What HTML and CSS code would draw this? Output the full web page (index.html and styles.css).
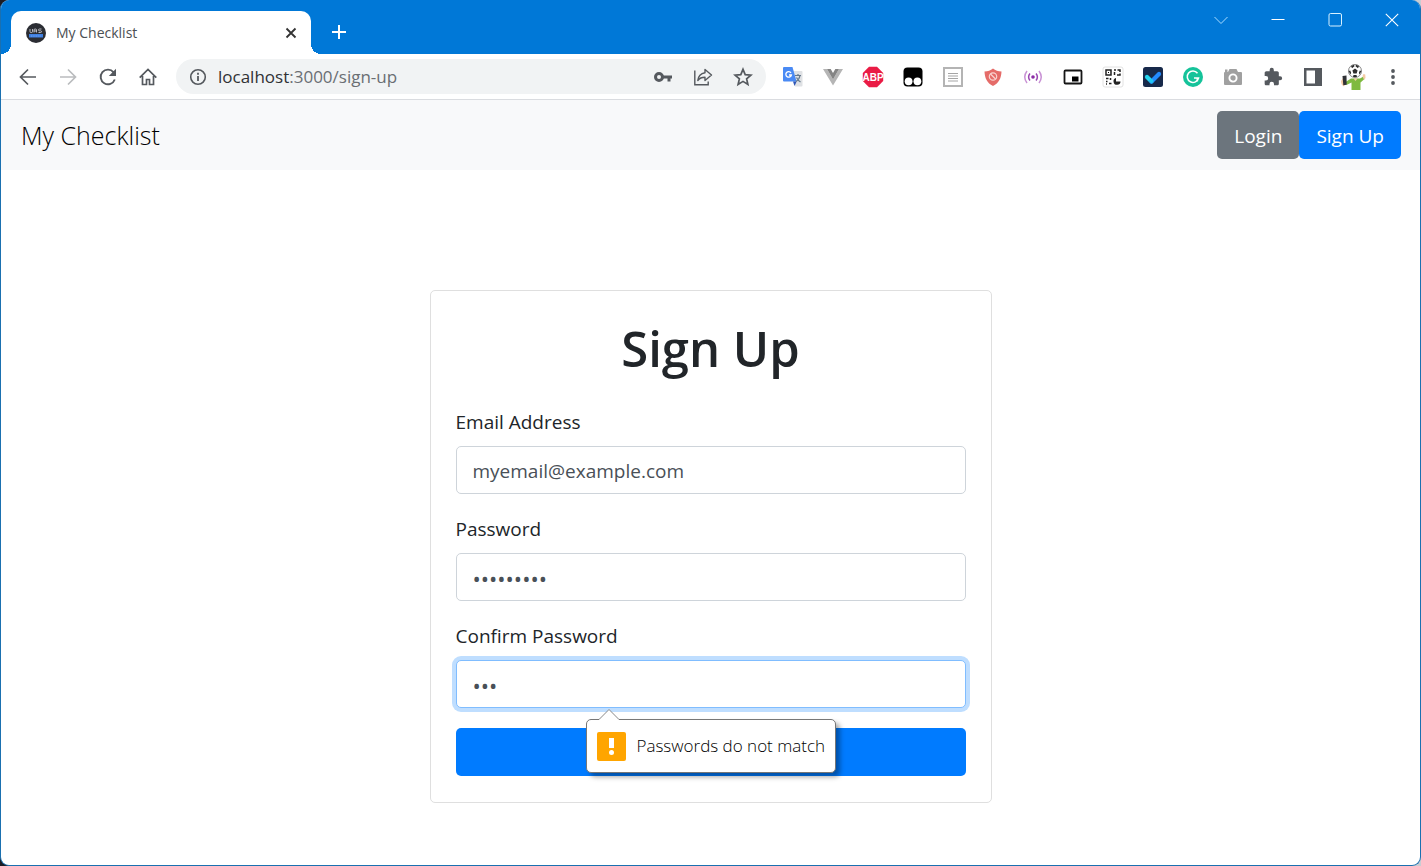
FILE: index.html
```html
<!DOCTYPE html>
<html lang="en">
<head>
<meta charset="utf-8">
<title>My Checklist</title>
<link rel="stylesheet" href="styles.css">
</head>
<body>
<div class="window">
  <header class="tabstrip">
    <div class="tab">
      <svg class="favicon" viewBox="0 0 20 20" aria-hidden="true"><circle cx="10" cy="10" r="10" fill="#2b2d33"/><path d="M4 6v2.500q0 1 1 1h.5q1 0 1-1V6M8 9.500V7q0-1 1-1h.5q1 0 1 1v2.500M8 8h2.500M15.500 6h-2q-1 0-1 .9t1 .9h1q1 0 1 .85t-1 .85h-2" fill="none" stroke="#c9cbd0" stroke-width=".9"/><path d="M3 11h14v3.500H3z" fill="#3f7fe0"/><path d="M5 13h10" stroke="#6fa4f0" stroke-width="1" stroke-dasharray="1 .7"/></svg>
      <span class="tab-title">My Checklist</span>
      <button class="tab-close" aria-label="Close tab"><svg width="12" height="12" viewBox="0 0 12 12"><path d="M1.500 1.500l9 9M10.500 1.500l-9 9" stroke="#333" stroke-width="1.800"/></svg></button>
    </div>
    <button class="new-tab" aria-label="New tab"><svg width="16" height="16" viewBox="0 0 16 16"><path d="M8 1v14M1 8h14" stroke="#fff" stroke-width="2"/></svg></button>
    <div class="controls">
      <button aria-label="Search tabs"><svg width="14" height="14" viewBox="0 0 14 14"><path d="M.5 4l6.500 6.500L13.500 4" fill="none" stroke="#a9dcff"/></svg></button>
      <button aria-label="Minimize"><svg width="14" height="14" viewBox="0 0 14 14"><path d="M.5 6.500h13" stroke="#fff"/></svg></button>
      <button aria-label="Maximize"><svg width="14" height="14" viewBox="0 0 14 14"><rect x="1" y=".5" width="12.500" height="12.500" rx="1.500" fill="none" stroke="#d8f1ff"/></svg></button>
      <button aria-label="Close"><svg width="14" height="14" viewBox="0 0 14 14"><path d="M.8.8l12.400 12.400M13.200.8L.8 13.200" stroke="#fff" stroke-width="1.100"/></svg></button>
    </div>
  </header>

  <div class="toolbar">
    <div class="tools">
      <button aria-label="Back"><svg width="20" height="20" viewBox="0 0 20 20"><path d="M18 10H3M10 2.500L2.500 10l7.500 7.500" fill="none" stroke="#55595e" stroke-width="1.700"/></svg></button>
      <button aria-label="Forward"><svg width="20" height="20" viewBox="0 0 20 20"><path d="M2 10h15M10 2.500l7.500 7.500-7.500 7.500" fill="none" stroke="#babcbe" stroke-width="1.700"/></svg></button>
      <button aria-label="Reload"><svg width="20" height="20" viewBox="0 0 20 20"><path d="M16.800 12.500A7.300 7.300 0 1 1 15.600 5.300" fill="none" stroke="#55595e" stroke-width="1.900"/><path d="M18 1.800V9h-7.200z" fill="#55595e"/></svg></button>
      <button aria-label="Home"><svg width="20" height="20" viewBox="0 0 20 20"><path d="M1.700 10.700L10 2.500l8.300 8.200M4.500 9v8.500h4v-5h3v5h4V9" fill="none" stroke="#55595e" stroke-width="1.700"/></svg></button>
    </div>
    <div class="omnibox">
      <svg width="18" height="18" viewBox="0 0 18 18" aria-hidden="true"><circle cx="9" cy="9" r="7.300" fill="none" stroke="#55595e" stroke-width="1.600"/><path d="M9 8v5M9 4.800v1.900" stroke="#55595e" stroke-width="1.800"/></svg>
      <div class="url">localhost<span class="path">:3000/sign-up</span></div>
      <div class="tools">
        <button aria-label="Passwords"><svg width="20" height="20" viewBox="0 0 20 20"><circle cx="6" cy="10" r="3.500" fill="none" stroke="#55595e" stroke-width="3"/><path d="M10 8.500h9v3h-1.500v3h-3v-3H10z" fill="#55595e"/></svg></button>
        <button aria-label="Share"><svg width="20" height="20" viewBox="0 0 20 20"><path d="M1.800 3.500v14.200h13.400v-3.200" fill="none" stroke="#55595e" stroke-width="1.400"/><path d="M12 2.500l6.500 5.500-6.500 5.500v-3.200c-3.400 0-5.600 1-7.200 3.200.5-4.500 3.200-7.200 7.200-7.800z" fill="none" stroke="#55595e" stroke-width="1.400" stroke-linejoin="round"/></svg></button>
        <button aria-label="Bookmark"><svg width="20" height="20" viewBox="0 0 20 20"><path d="M10 2.300l2.200 5.300 5.700.5-4.300 3.700 1.300 5.600-4.900-3-4.900 3 1.300-5.600-4.300-3.700 5.700-.5z" fill="none" stroke="#55595e" stroke-width="1.700"/></svg></button>
      </div>
    </div>
    <div class="tools">
      <button aria-label="Google Translate"><svg width="22" height="22" viewBox="0 0 22 22"><path d="M9 5h10.500q1 0 1 1v13.500q0 1-1 1H13z" fill="#dfe1e4"/><path d="M2 1h8.500l4 14.500H2q-1 0-1-1V2q0-1 1-1z" fill="#4a8af4"/><path d="M11 15.500h3.700L12.500 20z" fill="#2f56b5"/><path d="M9 6.800A2.800 2.800 0 1 0 9.400 9H7" fill="none" stroke="#fff" stroke-width="1.300"/><path d="M13 9.500h6M16 8v1.500M18 9.500c-.5 3-2.300 5-4 6M14.500 11.500q1.500 3 4 4.500" fill="none" stroke="#65798c" stroke-width="1.200"/></svg></button>
      <button aria-label="Vue devtools"><svg width="20" height="20" viewBox="0 0 20 20"><path d="M0 2h4l6 10.500L16 2h4L10 18.500z" fill="#b5b5b5"/><path d="M4 2h3.700L10 6l2.300-4H16l-6 10.500z" fill="#858585"/></svg></button>
      <button aria-label="Adblock Plus"><svg width="22" height="22" viewBox="0 0 22 22"><path d="M7 .8h8L21.200 7v8L15 21.200H7L.8 15V7z" fill="#ea1b45"/><text x="11" y="15" class="abp">ABP</text></svg></button>
      <button aria-label="Tampermonkey"><svg width="20" height="20" viewBox="0 0 20 20"><rect x=".5" y=".5" width="19" height="19" rx="4"/><circle cx="5.600" cy="14.300" r="3.900" fill="#fff"/><circle cx="14.400" cy="14.300" r="3.900" fill="#fff"/></svg></button>
      <button aria-label="Reader"><svg width="20" height="20" viewBox="0 0 20 20"><path d="M1 1h18v18H1z" fill="#fff" stroke="#b4b4b4" stroke-width="2"/><path d="M5 6.500h10M5 9h10M5 11.500h10M5 14h10" stroke="#a5a5a5" stroke-width="1.200"/></svg></button>
      <button aria-label="Shield"><svg width="20" height="20" viewBox="0 0 20 20"><path d="M10 1.500c2.500 2 5 2.800 8.500 3-.2 6.500-2.500 11.500-8.500 14.500C4 16 1.700 11 1.500 4.500c3.500-.2 6-1 8.500-3z" fill="#e56c69"/><circle cx="10" cy="9.500" r="3.700" fill="none" stroke="#f9d4d0" stroke-width="1.200"/><path d="M7.500 7l5 5" stroke="#f9d4d0" stroke-width="1.200"/></svg></button>
      <button aria-label="Broadcast"><svg width="20" height="20" viewBox="0 0 20 20"><circle cx="10" cy="10" r="1.800" fill="#8b2aa6"/><path d="M7 6.500q-2.800 3.500 0 7M13 6.500q2.800 3.500 0 7" fill="none" stroke="#9a46b2" stroke-width="1.500"/><path d="M4 4q-4.500 6 0 12M16 4q4.500 6 0 12" fill="none" stroke="#c993d5" stroke-width="1.500"/></svg></button>
      <button aria-label="Picture in picture"><svg width="20" height="20" viewBox="0 0 20 20"><rect x="1.500" y="3.500" width="17" height="13" rx="1" fill="#fff" stroke="#151515" stroke-width="1.800"/><path d="M9 9.500h6.500v5H9z"/></svg></button>
      <button aria-label="QR code"><svg width="22" height="22" viewBox="0 0 22 22"><rect x="1" y="1" width="20" height="20" rx="2" fill="#fff" stroke="#e2e2e2"/><path d="M4 4h5v5H4zM12 4h2M15.500 4H18v2M12.500 6v3M15 9h3V7.500M4 12.500h2.500M8.500 12v2M4 15.500h1.500M7 17.500h2.500M4 18h1" fill="none" stroke="#222" stroke-width="1.500"/><path d="M6 6h1v1H6z"/><path d="M14 12v3.500h4.500A3.500 3.500 0 1 1 14 12z" fill="#222"/></svg></button>
      <button aria-label="Tasks"><svg width="20" height="20" viewBox="0 0 20 20"><rect width="20" height="20" rx="2.500" fill="#17294a"/><path d="M4 10l4.500 4.500" stroke="#25d6ef" stroke-width="4.200" stroke-linecap="round"/><path d="M8.500 14.500L16 7" stroke="#238bff" stroke-width="4.200" stroke-linecap="round"/><circle cx="8.500" cy="14" r="2" fill="#20c9f3"/></svg></button>
      <button aria-label="Grammarly"><svg width="20" height="20" viewBox="0 0 20 20"><circle cx="10" cy="10" r="10" fill="#15c39a"/><path d="M14.500 6.300A5.700 5.700 0 1 0 15.500 11H11M14.300 14.500V11" fill="none" stroke="#fff" stroke-width="1.600"/></svg></button>
      <button aria-label="Screenshot"><svg width="20" height="20" viewBox="0 0 20 20"><path d="M1 6q0-1 1-1h3l1.500-3h7L15 5h3q1 0 1 1v11q0 1-1 1H2q-1 0-1-1zM2 2.500h2.500V5H2z" fill="#a0a0a0"/><circle cx="10" cy="11" r="3.600" fill="#a0a0a0" stroke="#fff" stroke-width="1.900"/></svg></button>
      <button aria-label="Extensions"><svg width="20" height="20" viewBox="0 0 24 24"><path fill="#55595e" d="M20.500 11H19V7c0-1.100-.9-2-2-2h-4V3.500a2.500 2.500 0 0 0-5 0V5H4c-1.100 0-2 .9-2 2v3.800h1.500a2.700 2.700 0 0 1 0 5.400H2V20c0 1.100.9 2 2 2h3.800v-1.500a2.700 2.700 0 0 1 5.400 0V22H17c1.100 0 2-.9 2-2v-4h1.500a2.500 2.500 0 0 0 0-5z"/></svg></button>
      <button aria-label="Side panel"><svg width="20" height="20" viewBox="0 0 20 20"><path d="M1 1h18v18H1zm2.500 2.500v13h8.500v-13z" fill="#55595e" fill-rule="evenodd"/></svg></button>
      <button aria-label="Profile"><svg width="26" height="28" viewBox="0 0 26 28"><path d="M11 15.500h9l3.500-2 1 2.500-4 3.500V27h-9v-7.500l-5 2.500-1-3z" fill="#7fba40"/><path d="M13.500 15.500h4l-2 2.500z" fill="#f5cba6"/><path d="M1 18l2-3 2.500 5L4 23.500q-3-1.500-3-5.500zM22.500 13l1-2 1.800.5.2 3.500-1.500 2z" fill="#f5cba6"/><path d="M2.500 13l4-.6.2 9.400-3.400.4z" fill="#303236"/><circle cx="15" cy="8" r="6.500" fill="#fff" stroke="#666" stroke-width=".8"/><path d="M15 5.500l2.600 1.900-1 3h-3.200l-1-3zM11 3l3-1.300.5 1.500-2.500 2zM19 3l-3-1.300-.5 1.500 2.500 2zM8.700 8l1.500-.5 1 2.500-1 1.500zM21.300 8l-1.500-.5-1 2.500 1 1.500zM13 14l.5-2h3l.5 2z" fill="#2d2d2d"/></svg></button>
      <button aria-label="Menu"><svg width="20" height="20" viewBox="0 0 20 20" fill="#55595e"><circle cx="10" cy="4" r="1.900"/><circle cx="10" cy="10" r="1.900"/><circle cx="10" cy="16" r="1.900"/></svg></button>
    </div>
  </div>

  <nav class="navbar">
    <a class="brand" href="#">My Checklist</a>
    <div class="nav-actions">
      <button class="btn btn-secondary">Login</button>
      <button class="btn btn-primary">Sign Up</button>
    </div>
  </nav>

  <main class="page">
    <form class="card">
      <h1>Sign Up</h1>
      <div class="group">
        <label for="email">Email Address</label>
        <input id="email" type="email" value="myemail@example.com">
      </div>
      <div class="group">
        <label for="password">Password</label>
        <input id="password" type="password" value="secret123">
      </div>
      <div class="group">
        <label for="confirm">Confirm Password</label>
        <input id="confirm" class="focused" type="password" value="abc">
        <div class="tooltip" role="alert">
          <svg class="tip" width="20" height="11" viewBox="0 0 20 11" aria-hidden="true"><path d="M0 10.500L10 .5l10 10V11H0z" fill="#fff"/><path d="M0 10.500L10 .5l10 10" fill="none" stroke="#888"/></svg>
          <svg width="29" height="29" viewBox="0 0 29 29" aria-hidden="true"><rect width="29" height="29" rx="2" fill="#ffa500"/><path d="M12 6h5v10h-5z" fill="#fff"/><circle cx="14.500" cy="20.500" r="2.500" fill="#fff"/></svg>
          <span>Passwords do not match</span>
        </div>
      </div>
      <button class="btn btn-primary" type="submit" aria-label="Sign Up"></button>
    </form>
  </main>
</div>
</body>
</html>
```
FILE: styles.css
```css
* { box-sizing: border-box; }

body {
  margin: 0;
  background: linear-gradient(90deg, #1c1c24 50%, #c9ccd2 50%);
  color: #212529;
  font: 19px/30px "Open Sans", "Noto Sans", sans-serif;
}

button, input { font: inherit; }

button {
  display: flex;
  align-items: center;
  justify-content: center;
  padding: 0;
  border: 0;
  background: none;
}

svg { display: block; flex: none; }

.window {
  display: flex;
  flex-direction: column;
  min-height: 100vh;
  border: 1px solid #1a70b0;
  border-top: 0;
  border-radius: 9px;
  background: #fff;
  overflow: hidden;
}

.tabstrip {
  display: flex;
  align-items: flex-start;
  height: 54px;
  padding-left: 10px;
  background: #0078d7;
}

.tab {
  position: relative;
  display: flex;
  align-items: center;
  width: 300px;
  height: 43px;
  margin-top: 11px;
  padding: 0 10px 0 15px;
  border-radius: 10px 10px 0 0;
  background: #fff;
}

.tab::before, .tab::after {
  content: "";
  position: absolute;
  bottom: 0;
  width: 10px;
  height: 10px;
}

.tab::before {
  right: 100%;
  background: radial-gradient(circle at 0 0, #0078d7 10px, #fff 10px);
}

.tab::after {
  left: 100%;
  background: radial-gradient(circle at 100% 0, #0078d7 10px, #fff 10px);
}

.favicon { width: 20px; height: 20px; }

.tab-title {
  flex: 1;
  margin-left: 10px;
  color: #4b4f53;
  font-size: 14px;
}

.tab-close { width: 20px; height: 20px; }

.new-tab {
  width: 40px;
  height: 42px;
  margin: 11px 0 0 8px;
}

.controls { display: flex; margin-left: auto; }

.controls button { width: 57px; height: 40px; }

.toolbar {
  display: flex;
  align-items: center;
  height: 46px;
  padding: 0 7px;
  border-bottom: 1px solid #dadce0;
}

.tools { display: flex; }

.tools button { width: 40px; height: 35px; }

.abp {
  fill: #fff;
  font: bold 10px "Liberation Sans", sans-serif;
  text-anchor: middle;
}

.omnibox {
  display: flex;
  flex: 1;
  align-items: center;
  height: 35px;
  margin: 0 7px 0 8px;
  padding: 0 3px 0 13px;
  border-radius: 18px;
  background: #f1f3f4;
}

.url {
  flex: 1;
  margin-left: 11px;
  color: #303134;
  font-size: 17px;
}

.path { color: #6a6e73; }

.navbar {
  display: flex;
  align-items: center;
  justify-content: space-between;
  height: 70px;
  padding: 0 19px 0 20px;
  background: #f8f9fa;
}

.brand {
  color: #000;
  font-size: 25px;
  font-weight: 300;
  text-decoration: none;
}

.nav-actions { display: flex; }

.btn {
  height: 48px;
  padding: 2px 16px 0;
  border-radius: 5px;
  color: #fff;
}

.btn-primary { background: #007bff; }

.btn-secondary { background: #6c757d; }

.nav-actions .btn { padding: 2px 17px 0; }

.page {
  flex: 1;
  padding: 120px 20px 62px;
}

.card {
  display: flex;
  flex-direction: column;
  gap: 20px;
  max-width: 562px;
  margin: 0 auto;
  padding: 25px 25px 26px;
  border: 1px solid #dfdfdf;
  border-radius: 5px;
}

h1 {
  margin: 0 0 7px;
  font-size: 49px;
  font-weight: 600;
  line-height: 64px;
  text-align: center;
}

.group {
  position: relative;
  display: flex;
  flex-direction: column;
  gap: 9px;
}

.group input {
  width: 100%;
  height: 48px;
  padding: 2px 16px 0;
  border: 1px solid #ced4da;
  border-radius: 5px;
  outline: 0;
  background: #fff;
  color: #495057;
}

.group input[type="password"] { font-size: 22px; }

.group .focused {
  border-color: #80bdff;
  box-shadow: 0 0 0 4px #bfdeff;
}

.tooltip {
  position: absolute;
  top: 98px;
  left: 130px;
  display: flex;
  align-items: center;
  gap: 11px;
  height: 54px;
  padding: 0 10px;
  border: 1px solid #777;
  border-radius: 5px;
  background: #fff;
  box-shadow: 4px 4px 5px rgba(0, 0, 0, .35);
  color: #000;
  font-size: 17px;
  font-weight: 300;
  white-space: nowrap;
}

.tip {
  position: absolute;
  bottom: 100%;
  left: 12px;
}
```
